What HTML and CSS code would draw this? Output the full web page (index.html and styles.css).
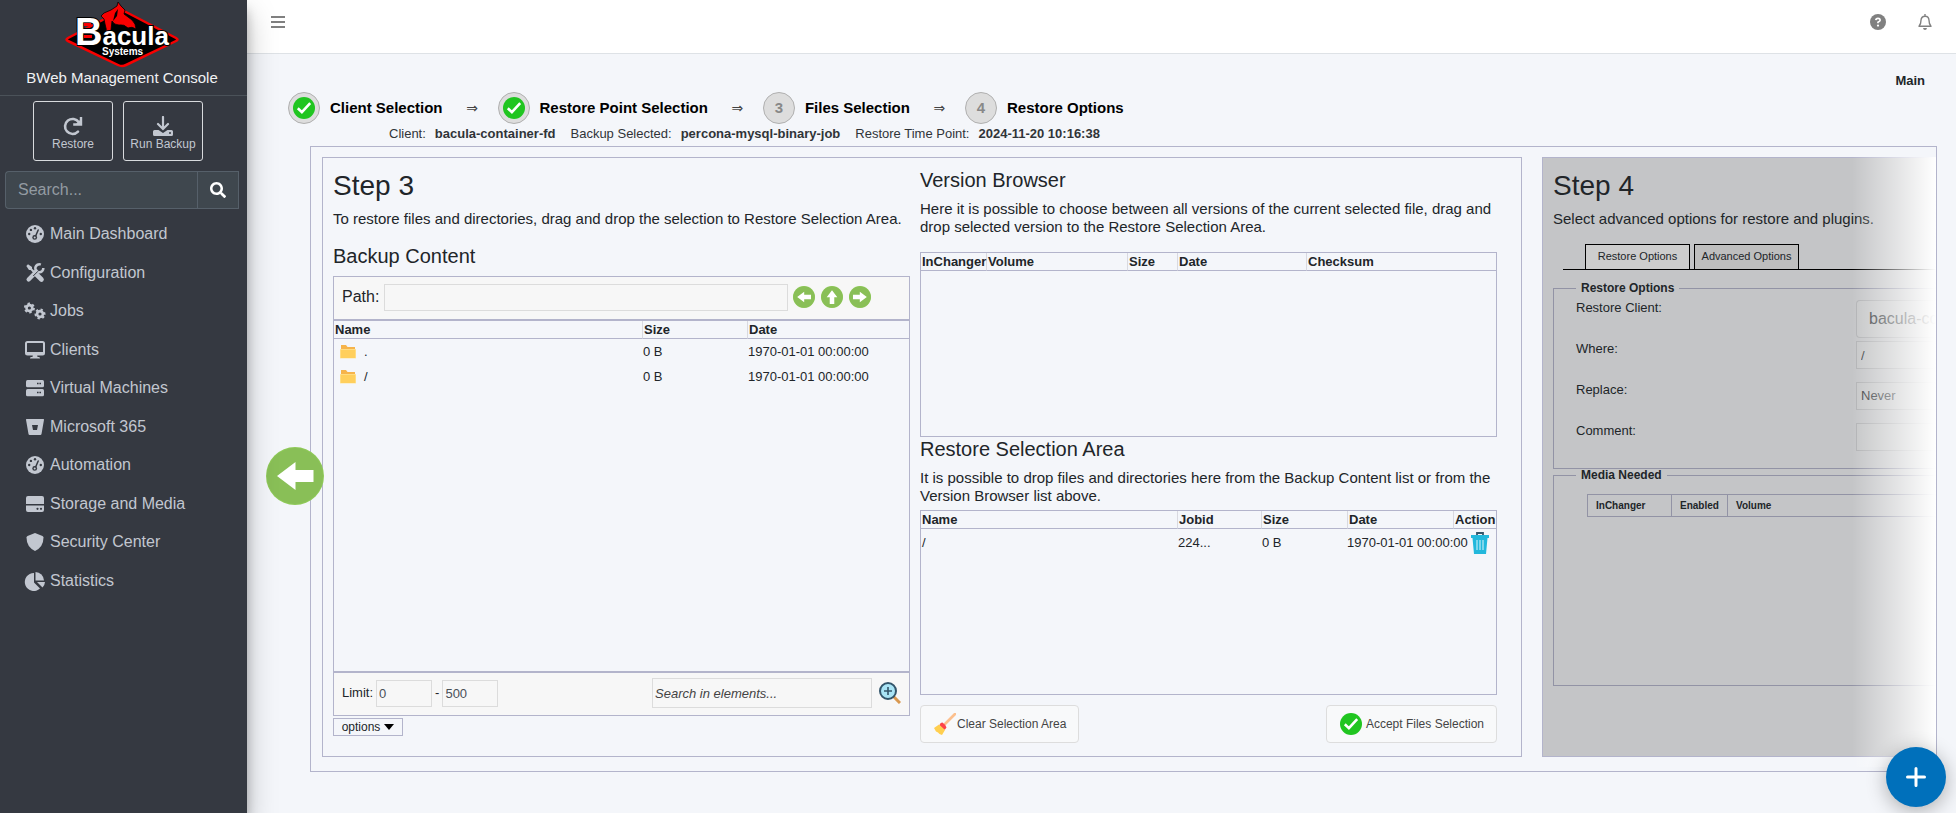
FILE: index.html
```html
<!DOCTYPE html>
<html lang="en">
<head>
<meta charset="utf-8">
<title>BWeb Management Console</title>
<link rel="stylesheet" href="styles.css">
</head>
<body>
<svg class="defs" aria-hidden="true">
  <symbol id="gauge" viewBox="0 0 18 18"><circle cx="9" cy="9" r="9" fill="currentColor"/><g fill="#353941"><circle cx="9" cy="3.2" r="1.2"/><circle cx="4.9" cy="4.9" r="1.2"/><circle cx="3.2" cy="9" r="1.2"/><circle cx="14.8" cy="9" r="1.2"/><circle cx="8.7" cy="12.4" r="2.4"/></g><path d="M9 12.5 12.2 5" stroke="#353941" stroke-width="1.5" stroke-linecap="round"/><circle cx="8.7" cy="12.4" r="1" fill="currentColor"/></symbol>
  <symbol id="back" viewBox="0 0 58 58"><circle cx="29" cy="29" r="29" fill="#8fca58"/><circle cx="29" cy="29" r="28" fill="#89bf57"/><path d="M11 29 29.500 15v8H47.500v12H29.500v8z" fill="#fff"/></symbol>
  <symbol id="check" viewBox="0 0 22 22"><circle cx="11" cy="11" r="11" fill="#20c520"/><path d="M4.800 11.300 8.900 15.200 17.200 6.200" fill="none" stroke="#fff" stroke-width="2.600"/></symbol>
  <symbol id="folder" viewBox="0 0 16 16"><path d="M1 1h5l1.500 2H15v5H1z" fill="#f6b44b"/><path d="M0 5h16v9.500H0z" fill="#ffe9a8"/><path d="M.5 5.500h15V14H.5z" fill="#ffcf5c"/></symbol>
</svg>

<aside class="sidebar">
  <header class="brand">
    <svg class="logo" viewBox="62 0 120 68" role="img" aria-label="Bacula Systems">
      <path d="M68 38 118 12q4-2 8 0l50 26q3 1.500 0 3L126 65q-4 2-8 0L68 41q-3-1.500 0-3z" fill="#000" stroke="#f80000" stroke-width="2.500"/>
      <path d="M101 16l3-3 7-3 6-4 1-4 3 4 4 4-1 4 8 6q4 4 4 9-4-3-8-1-4-4-9-3-5 0-7-4l-1 9-5 5q1-6-1-11l-1-5z" fill="#f80000" stroke="#000" stroke-width=".8"/>
      <path d="M113 21l2-8 3-4-1 7z"/>
      <text class="logo-word" x="75" y="45"><tspan class="logo-cap">B</tspan>acula</text>
      <path d="M84 23h7v3h-7zM84 35h8v3h-8z" fill="#f80000"/>
      <text class="logo-sub" x="102" y="55">Systems</text>
    </svg>
    <div class="brand-name">BWeb Management Console</div>
  </header>
  <div class="quick">
    <button class="quick-btn" type="button">
      <svg width="20" height="20" viewBox="0 0 20 20"><path d="M15.800 6.300A7.500 7.500 0 1 0 15 15.600" fill="none" stroke="currentColor" stroke-width="2.600" stroke-linecap="round"/><path d="M18 1v7.500h-7.800" fill="none" stroke="currentColor" stroke-width="2.400"/><path d="M18 3v5h-5z" fill="currentColor"/></svg>
      Restore</button>
    <button class="quick-btn" type="button">
      <svg width="20" height="20" viewBox="0 0 20 20" fill="none"><path d="M10 1v11M5 8l5 5 5-5" stroke="currentColor" stroke-width="2.200" stroke-linecap="round"/><path d="M1.500 14H5.500l4.500 3 4.500-3h4q1.500 0 1.500 1.500v3q0 1.500-1.500 1.500h-17Q0 20 0 18.500v-3Q0 14 1.500 14z" fill="currentColor"/><circle cx="17" cy="17" r="1" fill="#353941"/></svg>
      Run Backup</button>
  </div>
  <form class="search">
    <input class="search-input" type="text" placeholder="Search..." aria-label="Search">
    <button class="search-btn" type="button" aria-label="Search"><svg width="16" height="16" viewBox="0 0 512 512" fill="#fff"><path d="M505 442.700L405.300 343c-4.500-4.500-10.600-7-17-7H372c27.600-35.300 44-79.700 44-128C416 93.100 322.900 0 208 0S0 93.100 0 208s93.100 208 208 208c48.300 0 92.700-16.400 128-44v16.300c0 6.400 2.500 12.500 7 17l99.700 99.700c9.400 9.400 24.600 9.400 33.900 0l28.300-28.300c9.400-9.400 9.400-24.600.1-34zM208 336c-70.700 0-128-57.200-128-128 0-70.700 57.200-128 128-128 70.700 0 128 57.200 128 128 0 70.700-57.200 128-128 128z"/></svg></button>
  </form>
  <nav class="menu">
    <a href="#"><svg class="mi" viewBox="-2 0 22 18"><use href="#gauge" width="18" height="18"/></svg>Main Dashboard</a>
    <a href="#"><svg class="mi" viewBox="-2 0 22 18" fill="none" stroke="currentColor"><path d="M10 10 15.500 15.500" stroke-width="4.600" stroke-linecap="round"/><path d="M3 3l8 8" stroke-width="2"/><path d="M.3 2 2 .3 6 3v3H3z" fill="currentColor" stroke="none"/><path d="M2.600 15.500 8.300 9.800" stroke-width="4.200" stroke-linecap="round"/><path d="M7 8.500 11.500 6" stroke-width="2.600"/><path d="M14.800.6A4 4 0 1 0 17.300 4" stroke-width="2.600"/><path d="M7.200 12 12 7.200" stroke="#353941" stroke-width="1"/></svg>Configuration</a>
    <a href="#"><svg class="mi" viewBox="-2 0 22 18" fill="none" stroke="currentColor"><circle cx="3.400" cy="6" r="2.900" stroke-width="2.600"/><circle cx="3.400" cy="6" r="4.600" stroke-width="1.800" stroke-dasharray="2.400 2.417"/><circle cx="14" cy="12" r="2.900" stroke-width="2.600"/><circle cx="14" cy="12" r="4.600" stroke-width="1.800" stroke-dasharray="2.400 2.417" transform="rotate(30 14 12)"/></svg>Jobs</a>
    <a href="#"><svg class="mi" viewBox="-2 0 22 18"><rect x="0" y="1" width="18" height="12.500" rx="1.500" fill="none" stroke="currentColor" stroke-width="2"/><path d="M0 11h18v2H0zM7 13h4l.5 3H13q1 0 1 1.500H4Q4 16 5 16h1.500z" fill="currentColor"/></svg>Clients</a>
    <a href="#"><svg class="mi" viewBox="-2 0 22 18"><rect y="1" width="18" height="7.300" rx="1.500" fill="currentColor"/><rect y="10" width="18" height="7.300" rx="1.500" fill="currentColor"/><path d="M11 4.600h4.500M11 13.600h4.500" stroke="#353941" stroke-width="1.500" stroke-dasharray="1.600 .8"/></svg>Virtual Machines</a>
    <a href="#"><svg class="mi" viewBox="-2 0 22 18"><path d="M.5 1h17q.5 0 .5.700L15.500 16q-.2 1-1.200 1H3.700q-1 0-1.200-1L0 1.700Q0 1 .5 1zM6 7l1 5h4l1-5z" fill="currentColor" fill-rule="evenodd"/></svg>Microsoft 365</a>
    <a href="#"><svg class="mi" viewBox="-2 0 22 18"><use href="#gauge" width="18" height="18"/></svg>Automation</a>
    <a href="#"><svg class="mi" viewBox="-2 0 22 18"><path d="M2 1h14q2 0 2 2v6H0V3q0-2 2-2zM0 10.500h18V15q0 2-2 2H2q-2 0-2-2z" fill="currentColor"/><circle cx="11.500" cy="13.800" r="1.100" fill="#353941"/><circle cx="15" cy="13.800" r="1.100" fill="#353941"/></svg>Storage and Media</a>
    <a href="#"><svg class="mi" viewBox="-2 0 22 18"><path d="M9 0 16.500 3q1 .5 1 1.500 0 9.500-8.500 13.500Q.5 14 .5 4.500q0-1 1-1.500z" fill="currentColor"/></svg>Security Center</a>
    <a href="#"><svg class="mi" viewBox="-2 0 22 18" fill="currentColor"><path d="M8 1v9.500l6 6A9 9 0 1 1 8 1z"/><path d="M9.500 0A9 9 0 0 1 18 8.500H9.500z"/><path d="M11 10h8q-.3 3.300-2.500 5.500z"/></svg>Statistics</a>
  </nav>
</aside>

<div class="page">
  <header class="topbar">
    <button class="icon-btn" type="button" aria-label="Toggle menu"><svg width="14" height="12" viewBox="0 0 14 12"><path d="M0 1h14M0 6h14M0 11h14" stroke="currentColor" stroke-width="2"/></svg></button>
    <div class="topbar-right">
      <a class="icon-btn" href="#" aria-label="Help"><svg width="16" height="16" viewBox="0 0 16 16"><circle cx="8" cy="8" r="8" fill="currentColor"/><path d="M5.800 6.200Q6 4.300 8 4.300t2.200 1.700Q10.200 7 8 8.300v1" fill="none" stroke="#fff" stroke-width="1.700"/><circle cx="8" cy="11.600" r="1.100" fill="#fff"/></svg></a>
      <a class="icon-btn" href="#" aria-label="Notifications"><svg width="14" height="16" viewBox="0 0 14 16"><path d="M7 0v2M1 12.300q2-2 2-6Q3.200 2.400 7 2.300t4 4q0 4 2 6z" fill="none" stroke="currentColor" stroke-width="1.400" stroke-linejoin="round"/><path d="M5 14h4q-.3 2-2 2t-2-2z" fill="currentColor"/></svg></a>
    </div>
  </header>

  <main class="content">
    <div class="crumbs"><a href="#">Main</a></div>
    <ol class="steps">
      <li><span class="dot"><svg width="22" height="22"><use href="#check"/></svg></span>Client Selection</li>
      <li class="arrow">⇒</li>
      <li><span class="dot"><svg width="22" height="22"><use href="#check"/></svg></span>Restore Point Selection</li>
      <li class="arrow">⇒</li>
      <li><span class="dot">3</span>Files Selection</li>
      <li class="arrow">⇒</li>
      <li><span class="dot">4</span>Restore Options</li>
    </ol>
    <div class="info">
      <span>Client:<b>bacula-container-fd</b></span>
      <span>Backup Selected:<b>percona-mysql-binary-job</b></span>
      <span>Restore Time Point:<b>2024-11-20 10:16:38</b></span>
    </div>

    <div class="wizard">
      <div class="frame">
        <section class="panel files">
          <div class="col">
            <h2>Step 3</h2>
            <p>To restore files and directories, drag and drop the selection to Restore Selection Area.</p>
            <h3 class="spaced">Backup Content</h3>
            <div class="bar path-bar">
              <label for="path">Path:</label>
              <input class="field path-field" id="path" type="text">
              <div class="path-nav">
                <button type="button" aria-label="Back"><svg width="22" height="22"><use href="#back"/></svg></button>
                <button type="button" aria-label="Up"><svg class="up" width="22" height="22"><use href="#back"/></svg></button>
                <button type="button" aria-label="Forward"><svg class="forward" width="22" height="22"><use href="#back"/></svg></button>
              </div>
            </div>
            <div class="grid-box fill">
              <table class="grid">
                <colgroup><col><col class="w105"><col class="w162"></colgroup>
                <thead><tr><th>Name</th><th>Size</th><th>Date</th></tr></thead>
                <tbody>
                  <tr><td><span class="file"><svg width="16" height="16"><use href="#folder"/></svg>.</span></td><td>0 B</td><td>1970-01-01 00:00:00</td></tr>
                  <tr><td><span class="file"><svg width="16" height="16"><use href="#folder"/></svg>/</span></td><td>0 B</td><td>1970-01-01 00:00:00</td></tr>
                </tbody>
              </table>
            </div>
            <div class="bar limit-bar">
              <label for="from">Limit:</label>
              <input class="field num" id="from" type="text" value="0">
              <span>-</span>
              <input class="field num" type="text" value="500" aria-label="Limit to">
              <input class="field find" type="text" placeholder="Search in elements..." aria-label="Search in elements">
              <button class="find-btn" type="button" aria-label="Search"><svg width="22" height="22" viewBox="0 0 22 22"><path d="M14 14l7 7" stroke="#d9984f" stroke-width="3"/><circle cx="9" cy="9" r="8" fill="#a9e4f5" stroke="#33556b" stroke-width="2"/><path d="M9 5v8M5 9h8" stroke="#33556b" stroke-width="1.600"/></svg></button>
            </div>
            <button class="options" type="button">options <svg width="10" height="6" viewBox="0 0 10 6"><path d="M0 0h10L5 6z"/></svg></button>
          </div>

          <div class="col">
            <h3>Version Browser</h3>
            <p class="lead">Here it is possible to choose between all versions of the current selected file, drag and drop selected version to the Restore Selection Area.</p>
            <div class="grid-box">
              <table class="grid">
                <colgroup><col class="w65"><col><col class="w50"><col class="w129"><col class="w190"></colgroup>
                <thead><tr><th>InChanger</th><th>Volume</th><th>Size</th><th>Date</th><th>Checksum</th></tr></thead>
              </table>
            </div>
            <h3>Restore Selection Area</h3>
            <p class="tight">It is possible to drop files and directories here from the Backup Content list or from the Version Browser list above.</p>
            <div class="grid-box">
              <table class="grid selection">
                <colgroup><col><col class="w84"><col class="w86"><col class="w106"><col class="w43"></colgroup>
                <thead><tr><th>Name</th><th>Jobid</th><th>Size</th><th>Date</th><th>Action</th></tr></thead>
                <tbody><tr><td>/</td><td>224...</td><td>0 B</td><td>1970-01-01 00:00:00</td><td class="act"><button type="button" aria-label="Remove"><svg width="22" height="22" viewBox="0 0 22 22"><path d="M8 3V1h6v2" fill="none" stroke="#35566b" stroke-width="1.800"/><path d="M2 3h18v3h-1.500L17 22H5L3.500 6H2z" fill="#22b8dc"/><path d="M8 8v10M11 8v10M14 8v10" stroke="#fff" stroke-opacity=".6" stroke-width="1.400"/></svg></button></td></tr></tbody>
              </table>
            </div>
            <div class="actions">
              <button class="action" type="button"><svg width="22" height="22" viewBox="0 0 22 22"><path d="M21 1 11 11" stroke="#fcc08d" stroke-width="2.600" stroke-linecap="round"/><path d="M8.500 9.500Q12 12 12.500 14.500q-1.500 2.500-3 2.500L5.500 12.500q.5-3 3-3z" fill="#fc4349"/><path d="M5 11.500 11 17 8 22 5.500 21 4 19.500 2 18.500 0 15z" fill="#ffcf4f"/></svg>Clear Selection Area</button>
              <button class="action accept" type="button"><svg width="22" height="22"><use href="#check"/></svg>Accept Files Selection</button>
            </div>
          </div>
        </section>

        <section class="panel next">
          <h2>Step 4</h2>
          <p>Select advanced options for restore and plugins.</p>
          <div class="tabs">
            <button class="tab active" type="button">Restore Options</button>
            <button class="tab" type="button">Advanced Options</button>
          </div>
          <fieldset class="opts">
            <legend>Restore Options</legend>
            <div class="row"><label for="client">Restore Client:</label><select class="client" id="client"><option>bacula-container-fd</option></select></div>
            <div class="row"><label for="where">Where:</label><input class="opt" id="where" type="text" value="/"></div>
            <div class="row"><label for="replace">Replace:</label><select class="opt" id="replace"><option>Never</option></select></div>
            <div class="row"><label for="comment">Comment:</label><input class="opt" id="comment" type="text"></div>
          </fieldset>
          <fieldset class="media">
            <legend>Media Needed</legend>
            <table class="media-table">
              <colgroup><col class="w84"><col class="w56"><col></colgroup>
              <thead><tr><th>InChanger</th><th>Enabled</th><th>Volume</th></tr></thead>
            </table>
          </fieldset>
        </section>
        <div class="fade"></div>
      </div>
      <button class="prev" type="button" aria-label="Previous step"><svg width="58" height="58"><use href="#back"/></svg></button>
    </div>
  </main>
</div>

<button class="fab" type="button" aria-label="Add"><svg width="20" height="20" viewBox="0 0 20 20"><path d="M10 1.500v17M1.500 10h17" stroke="#fff" stroke-width="3" stroke-linecap="round"/></svg></button>
</body>
</html>
```
FILE: styles.css
```css
:root {
  --line: #b3b4cb;
  --page: #f4f6fa;
  --side: #353941;
  --text: #212529;
}

* { box-sizing: border-box; }

body {
  margin: 0;
  min-height: 100vh;
  display: flex;
  background: var(--page);
  color: var(--text);
  font: 13px/16px "Liberation Sans", Arial, sans-serif;
}

button, input, select { font: inherit; color: inherit; margin: 0; }
button { padding: 0; border: 0; background: none; cursor: pointer; }
a { color: inherit; text-decoration: none; }
svg { display: block; flex: none; }
h2, h3, p, ol { margin: 0; padding: 0; font-weight: 400; }
.defs { position: absolute; width: 0; height: 0; }

/* Sidebar */
.sidebar {
  flex: 0 0 247px;
  min-width: 0;
  position: relative;
  z-index: 2;
  background: var(--side);
  color: #c2c7d0;
  box-shadow: 0 14px 28px rgba(0, 0, 0, .25), 0 10px 10px rgba(0, 0, 0, .22);
}
.brand {
  height: 96px;
  padding-right: 3px;
  border-bottom: 1px solid #4b5259;
  color: #f0f1f3;
  text-align: center;
}
.logo { width: 120px; height: 68px; margin: 0 auto; }
.logo text { font-family: "Liberation Sans", Arial, sans-serif; font-weight: 700; fill: #fff; }
.logo .logo-word { font-size: 26px; stroke: #000; stroke-width: 2; paint-order: stroke; }
.logo-cap { font-size: 38px; }
.logo .logo-sub { font-size: 10px; }
.brand-name { font-size: 15px; line-height: 20px; }
.quick { display: flex; gap: 10px; padding: 5px 0 10px 33px; }
.quick-btn {
  flex: 0 0 80px;
  height: 60px;
  padding-top: 6px;
  display: flex;
  flex-direction: column;
  align-items: center;
  justify-content: center;
  border: 1px solid #d8dadd;
  border-radius: 3px;
  font-size: 12px;
}
.search { display: flex; margin: 0 8px 6px 5px; height: 38px; }
.search-input, .search-btn { background: #3f474e; border: 1px solid #56606a; }
.search-input {
  flex: 1;
  min-width: 0;
  padding: 0 12px;
  border-right: 0;
  border-radius: 4px 0 0 4px;
  font-size: 16px;
}
.search-input::placeholder { color: #939ba2; opacity: 1; }
.search-btn { flex: 0 0 42px; display: grid; place-items: center; }
.menu { display: grid; grid-auto-rows: 1fr; min-height: 385px; }
.menu a { display: flex; align-items: center; gap: 4px; padding-left: 24px; font-size: 16px; }
.mi { width: 22px; height: 18px; overflow: visible; }

/* Top bar */
.page { flex: 1; min-width: 0; }
.topbar {
  display: flex;
  justify-content: space-between;
  height: 54px;
  padding: 14px 24px 0;
  background: #fff;
  border-bottom: 1px solid #dee2e6;
  color: #808080;
}
.topbar-right { display: flex; gap: 32px; }
.icon-btn { height: 16px; display: flex; align-items: center; }

/* Step header */
.content { padding-top: 17px; }
.crumbs { padding: 0 31px 2px 0; line-height: 19px; text-align: right; font-weight: 700; }
.steps {
  display: flex;
  align-items: center;
  padding-left: 41px;
  list-style: none;
  font-size: 15px;
  font-weight: 700;
  color: #000;
}
.steps li { display: flex; align-items: center; gap: 10px; }
.dot {
  width: 32px;
  height: 32px;
  display: grid;
  place-items: center;
  border: 1px solid #b0b0b0;
  border-radius: 50%;
  background: #ddd;
  color: #888;
}
.steps .arrow {
  width: 55px;
  padding-left: 4px;
  justify-content: center;
  font: 14px/16px "DejaVu Sans", sans-serif;
  color: #444;
}
.info { display: flex; gap: 15px; padding: 0 0 2px 142px; line-height: 20px; color: #303438; }
.info b { margin-left: 9px; }

/* Wizard */
.wizard { position: relative; margin: 0 19px 41px 63px; }
.frame {
  position: relative;
  display: grid;
  grid-template-columns: minmax(0, 1fr) 394px;
  gap: 20px;
  padding: 10px 0 14px 11px;
  border: 1px solid var(--line);
  overflow: hidden;
}
.panel { border: 1px solid var(--line); padding: 10px; min-width: 0; }
.prev { position: absolute; left: -44px; top: calc(50% - 12px); }
.fade {
  position: absolute;
  top: 10px;
  right: 0;
  bottom: 4px;
  width: 84px;
  background: linear-gradient(to right, rgba(255, 255, 255, 0), #fff);
  pointer-events: none;
}
h2 { font-size: 28px; line-height: 36px; margin-bottom: 6px; }
h3 { font-size: 20px; line-height: 24px; margin-bottom: 8px; }
h3.spaced { margin-top: 16px; }
p { font-size: 15px; line-height: 18px; }
p.lead { margin-bottom: 16px; }
p.tight { margin-bottom: 5px; }

.files {
  display: grid;
  grid-template-columns: minmax(0, 1fr) minmax(0, 1fr);
  gap: 10px;
  padding: 10px 24px 13px 10px;
}
.col { display: flex; flex-direction: column; }
.bar {
  display: flex;
  align-items: center;
  height: 44px;
  padding: 0 8px 2px;
  border: 1px solid var(--line);
  background: #f7f7f7;
}
.field { border: 1px solid #dcdcdc; background: #f7f7f7; color: #495057; padding: 0 2px; }
.path-bar { padding-right: 38px; font-size: 16px; }
.path-field { flex: 1; min-width: 0; height: 27px; margin: 0 5px; }
.path-nav { display: flex; gap: 6px; }
.up { transform: rotate(90deg); }
.forward { transform: rotate(180deg); }
.limit-bar { gap: 3px; }
.num { width: 56px; height: 27px; }
.find { width: 220px; height: 30px; margin: 0 4px 0 auto; font-style: italic; }
.find::placeholder { color: #444; opacity: 1; }
.options {
  align-self: flex-start;
  display: flex;
  justify-content: center;
  align-items: center;
  gap: 4px;
  width: 70px;
  height: 18px;
  margin: 2px 0 7px;
  border: 1px solid var(--line);
  font-size: 12px;
}

/* File grids */
.grid-box { min-height: 185px; border: 1px solid var(--line); }
.fill { flex: 1; }
.grid { width: 100%; table-layout: fixed; border-collapse: separate; border-spacing: 0; }
.grid th {
  height: 18px;
  padding: 0 1px;
  border-bottom: 1px solid var(--line);
  border-left: 1px solid #d9d9e0;
  text-align: left;
  white-space: nowrap;
}
.grid th:first-child { border-left: 0; }
.grid td { height: 25px; padding: 0 1px; white-space: nowrap; }
.grid.selection td { height: 28px; }
.grid.selection td:nth-child(4) { padding-left: 0; }
.grid td.act { padding-right: 5px; }
.act button { display: block; margin-left: auto; }
.file { display: flex; align-items: center; gap: 8px; padding-left: 5px; }
.w43 { width: 43px; }
.w50 { width: 50px; }
.w56 { width: 56px; }
.w65 { width: 65px; }
.w84 { width: 84px; }
.w86 { width: 86px; }
.w105 { width: 105px; }
.w106 { width: 106px; }
.w129 { width: 129px; }
.w162 { width: 162px; }
.w190 { width: 190px; }

.actions { display: flex; justify-content: space-between; margin-top: 10px; }
.action {
  display: flex;
  align-items: center;
  gap: 1px;
  height: 38px;
  padding: 0 12px 0 13px;
  border: 1px solid #ddd;
  border-radius: 4px;
  background: #f8f9fa;
  color: #444;
  font-size: 12px;
}
.accept { gap: 4px; }

/* Dimmed next step */
.next { padding-right: 0; border-right: 0; background: #c4c5c7; overflow: hidden; }
.tabs {
  display: flex;
  gap: 4px;
  height: 26px;
  margin: 16px 0 12px 10px;
  padding-left: 22px;
  border-bottom: 1px solid #000;
}
.tab {
  width: 105px;
  padding-bottom: 2px;
  border: 1px solid #000;
  border-bottom: 0;
  background: #bebebe;
  font-size: 11px;
}
.tab.active { background: #cdcdcd; }
fieldset {
  margin: 0;
  min-width: 0;
  border: 1px solid #9293a5;
  border-right: 0;
  padding: 6px 0 4px 22px;
}
legend { padding: 0 5px; font-size: 12px; line-height: 12px; font-weight: 700; }
.row { display: grid; grid-template-columns: 280px 1fr; align-items: start; height: 41px; }
.client, .opt {
  width: 100%;
  appearance: none;
  border: 1px solid #b1b2b4;
  border-right: 0;
  border-radius: 0;
  background: #c6c7c8;
  color: #3a3e42;
}
.client { height: 38px; padding: 0 0 0 12px; border-radius: 4px 0 0 4px; font-size: 16px; }
.opt { height: 28px; padding: 0 4px; }
.media { height: 217px; padding-top: 13px; }
.media-table {
  width: calc(100% - 11px);
  margin-left: 11px;
  table-layout: fixed;
  border-collapse: collapse;
  font-size: 10px;
}
.media-table th {
  height: 22px;
  padding: 0 0 0 8px;
  border: 1px solid #9293a5;
  text-align: left;
}
.media-table th:last-child { border-right: 0; }

.fab {
  position: fixed;
  right: 10px;
  bottom: 6px;
  z-index: 3;
  width: 60px;
  height: 60px;
  display: grid;
  place-items: center;
  border-radius: 50%;
  background: #0070bb;
  box-shadow: 0 4px 20px rgba(0, 0, 0, .3);
}
```
